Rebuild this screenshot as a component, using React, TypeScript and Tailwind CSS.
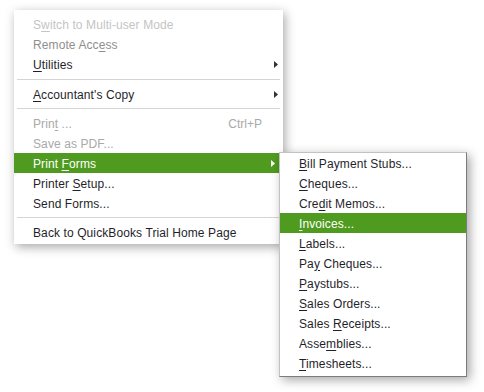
import React from "react"

type Item =
  | { sep: number }
  | {
      sep?: undefined
      pre: string
      u?: string
      post?: string
      tone?: "faint" | "muted" | "dim"
      shortcut?: string
      sub?: boolean
      active?: boolean
    }

const mainItems: Item[] = [
  { pre: "S", u: "w", post: "itch to Multi-user Mode", tone: "faint" },
  { pre: "Remote Acc", u: "e", post: "ss", tone: "muted" },
  { pre: "", u: "U", post: "tilities", sub: true },
  { sep: 10 },
  { pre: "", u: "A", post: "ccountant's Copy", sub: true },
  { sep: 9 },
  { pre: "Prin", u: "t", post: " ...", tone: "dim", shortcut: "Ctrl+P" },
  { pre: "Save as PDF...", tone: "dim" },
  { pre: "Print ", u: "F", post: "orms", sub: true, active: true },
  { pre: "Printer ", u: "S", post: "etup..." },
  { pre: "Send Forms..." },
  { sep: 9 },
  { pre: "Back to QuickBooks Trial Home Page" },
]

const subItems = [
  { pre: "", u: "B", post: "ill Payment Stubs..." },
  { pre: "", u: "C", post: "heques..." },
  { pre: "Cre", u: "d", post: "it Memos..." },
  { pre: "", u: "I", post: "nvoices...", active: true },
  { pre: "", u: "L", post: "abels..." },
  { pre: "Pa", u: "y", post: " Cheques..." },
  { pre: "", u: "P", post: "aystubs..." },
  { pre: "", u: "S", post: "ales Orders..." },
  { pre: "Sales ", u: "R", post: "eceipts..." },
  { pre: "Asse", u: "m", post: "blies..." },
  { pre: "", u: "T", post: "imesheets..." },
]

const toneClass = {
  faint: "text-[#c4c4c4]",
  muted: "text-[#8e8e8e]",
  dim: "text-[#a9a9a9]",
}

function Label({ pre, u, post }: { pre: string; u?: string; post?: string }) {
  return (
    <span className="whitespace-pre tracking-[0.1px]">
      {pre}
      {u && <span className="underline underline-offset-2">{u}</span>}
      {post}
    </span>
  )
}

function Arrow({ white }: { white?: boolean }) {
  return (
    <svg width="4" height="7" viewBox="0 0 4 7" className="absolute right-[5px] top-[7px]">
      <path d="M0 0 L4 3.5 L0 7 Z" fill={white ? "#ffffff" : "#333333"} />
    </svg>
  )
}

export default function App() {
  return (
    <div className="relative h-[392px] w-[484px] overflow-hidden bg-white font-['Liberation_Sans',Arial,sans-serif] text-[12px] text-[#1f1f2b]">
      <div className="ml-[14px] mt-[10px] flex w-[269px] flex-col bg-white pb-[2px] pt-[4px] shadow-[2px_3px_10px_rgba(0,0,0,0.35)]">
        {mainItems.map((it, i) => {
          if (it.sep)
            return (
              <div key={i} className={`flex items-center px-[3px] ${it.sep === 10 ? "h-[10px]" : "h-[9px]"}`}>
                <div className="h-px w-full bg-[#d4d4d4]" />
              </div>
            )
          return (
            <div
              key={i}
              className={`relative flex h-[20px] items-center pl-[19px] pr-[21px] pt-px ${
                it.active ? "mr-[3px] bg-[#4f9b1f] text-white" : it.tone ? toneClass[it.tone] : ""
              }`}
            >
              <Label pre={it.pre} u={it.u} post={it.post} />
              {it.shortcut && <span className="ml-auto">{it.shortcut}</span>}
              {it.sub && <Arrow white={it.active} />}
            </div>
          )
        })}
      </div>

      <div className="absolute left-[279px] top-[152px] flex w-[188px] flex-col border border-[#c2c2c2] border-b-[#7c7c7c] border-r-[#7c7c7c] bg-white pb-[3px] shadow-[3px_3px_10px_rgba(0,0,0,0.35)]">
        {subItems.map((it, i) => (
          <div
            key={i}
            className={`flex h-[20px] items-center pl-[19px] pt-px ${it.active ? "bg-[#4f9b1f] text-white" : ""}`}
          >
            <Label pre={it.pre} u={it.u} post={it.post} />
          </div>
        ))}
      </div>
    </div>
  )
}
